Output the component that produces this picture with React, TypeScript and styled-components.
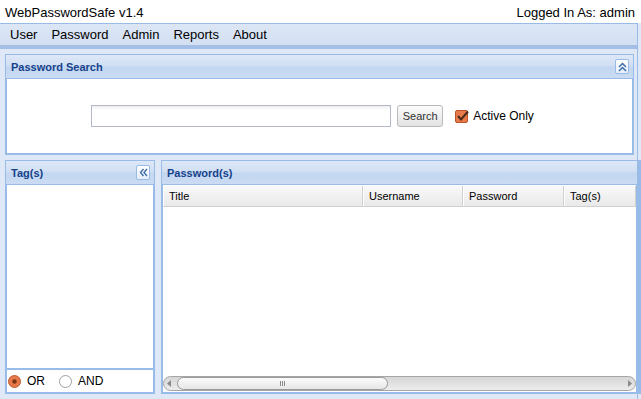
import styled, { createGlobalStyle } from 'styled-components'

const GlobalStyle = createGlobalStyle`
  html, body {
    margin: 0;
    padding: 0;
    background: #dfe8f6;
    font-family: 'Liberation Sans', Arial, sans-serif;
    overflow: hidden;
  }
`

const Page = styled.div`
  width: 641px;
  height: 399px;
  display: flex;
  flex-direction: column;
  background: #dfe8f6;
`

const TopBar = styled.div`
  height: 23px;
  background: #fff;
  display: flex;
  align-items: center;
  justify-content: space-between;
  padding: 1px 6px 0 5px;
  box-sizing: border-box;
  font-size: 13px;
  color: #000;
`

const Shell = styled.div`
  flex: 1;
  width: 638px;
  border-right: 1px solid #99bbe8;
  box-sizing: border-box;
  display: flex;
  flex-direction: column;
`

const MenuBar = styled.div`
  height: 26px;
  box-sizing: border-box;
  border-top: 1px solid #99bbe8;
  border-bottom: 4px solid #a4bfe6;
  background: linear-gradient(#dce6f5, #d3e0f2);
  display: flex;
  align-items: center;
  padding-left: 3px;
`

const MenuItem = styled.span`
  font-size: 13px;
  padding: 0 7px;
  color: #000;
`

const Content = styled.div`
  display: flex;
  flex-direction: column;
  gap: 5px;
  padding: 5px 3px 0 5px;
`

const Panel = styled.div<{ $width?: number; $height: number; $grow?: boolean; $overflow?: boolean }>`
  display: flex;
  flex-direction: column;
  box-sizing: border-box;
  height: ${({ $height }) => $height}px;
  width: ${({ $width }) => ($width ? `${$width}px` : 'auto')};
  flex: ${({ $grow }) => ($grow ? '1' : 'none')};
  border: 1px solid #99bbe8;
  border-right-width: ${({ $overflow }) => ($overflow ? '4px' : '1px')};
  margin-right: ${({ $overflow }) => ($overflow ? '-7px' : '0')};
  background: #fff;
`

const PanelHeader = styled.div`
  height: 24px;
  flex: none;
  box-sizing: border-box;
  border-bottom: 1px solid #99bbe8;
  background: linear-gradient(#dde8f7 0%, #d2e0f4 45%, #c4d7f1 52%, #cadbf3 100%);
  display: flex;
  align-items: center;
  justify-content: space-between;
  padding: 0 4px 0 5px;
`

const PanelTitle = styled.span`
  font-size: 11px;
  font-weight: bold;
  color: #15428b;
`

const ToolButton = styled.div`
  width: 14px;
  height: 15px;
  box-sizing: border-box;
  border: 1px solid #99bbe8;
  border-radius: 2px;
  background: linear-gradient(#ffffff, #e6eefa);
  display: flex;
  align-items: center;
  justify-content: center;
`

const PanelBody = styled.div`
  flex: 1;
  display: flex;
  flex-direction: column;
  border: 1px solid #99bbe8;
  border-top: none;
  background: #fff;
  min-height: 0;
`

const SearchBody = styled(PanelBody)`
  flex-direction: row;
  align-items: center;
  justify-content: center;
  padding-right: 14px;
`

const SearchInput = styled.input`
  width: 300px;
  height: 22px;
  box-sizing: border-box;
  border: 1px solid #b5b8c8;
  background: linear-gradient(#eeeeee 0px, #ffffff 4px);
  outline: none;
  margin: 0;
`

const SearchButton = styled.button`
  margin-left: 6px;
  height: 22px;
  width: 46px;
  box-sizing: border-box;
  border: 1px solid #b9b9b9;
  border-radius: 3px;
  background: linear-gradient(#fbfbfb, #e3e3e3);
  font-family: 'Liberation Sans', Arial, sans-serif;
  font-size: 11px;
  color: #333;
  padding: 0;
`

const CheckLabel = styled.label`
  margin-left: 12px;
  display: flex;
  align-items: center;
  gap: 4px;
  font-size: 12px;
  color: #000;
`

const Row = styled.div`
  display: flex;
  gap: 6px;
`

const TagList = styled.div`
  flex: 1;
  border-bottom: 2px solid #99bbe8;
`

const RadioRow = styled.div`
  height: 22px;
  display: flex;
  align-items: center;
  padding-left: 1px;
  font-size: 12px;
`

const RadioOption = styled.span`
  display: flex;
  align-items: center;
  gap: 6px;
  margin-right: 14px;
`

const GridHeader = styled.div`
  display: flex;
  height: 21px;
  flex: none;
  box-sizing: border-box;
  margin-top: 1px;
  border-bottom: 1px solid #d0d0d0;
  background: linear-gradient(#f9f9f9, #e9e9e9);
`

const HeaderCell = styled.div<{ $width?: number }>`
  width: ${({ $width }) => ($width ? `${$width}px` : 'auto')};
  flex: ${({ $width }) => ($width ? 'none' : '1')};
  box-sizing: border-box;
  border-right: 1px solid #d0d0d0;
  border-left: 1px solid #fff;
  font-size: 11px;
  color: #000;
  display: flex;
  align-items: center;
  padding-left: 5px;
`

const GridBody = styled.div`
  flex: 1;
  background: #fff;
`

const ScrollTrack = styled.div`
  height: 15px;
  margin: 0 0 1px 0;
  box-sizing: border-box;
  border: 1px solid #a5a5a5;
  border-radius: 8px;
  background: linear-gradient(#d6d6d6, #ececec);
  display: flex;
  align-items: center;
  padding: 0 3px 0 3px;
`

const ScrollThumb = styled.div`
  margin-left: 5px;
  width: 211px;
  height: 13px;
  box-sizing: border-box;
  border: 1px solid #9a9a9a;
  border-radius: 7px;
  background: linear-gradient(#fbfbfb, #e6e6e6);
  display: flex;
  align-items: center;
  justify-content: center;
  gap: 1px;
`

const Grip = styled.span`
  width: 1px;
  height: 5px;
  background: #8a8a8a;
`

const Spacer = styled.div`
  flex: 1;
`

const Arrow = ({ dir }: { dir: 'left' | 'right' }) => (
  <svg width="5" height="7" viewBox="0 0 5 7">
    <path d={dir === 'left' ? 'M4 0 L0 3.5 L4 7 Z' : 'M1 0 L5 3.5 L1 7 Z'} fill="#8a8a8a" />
  </svg>
)

const DoubleUp = () => (
  <svg width="9" height="10" viewBox="0 0 9 10">
    <path d="M1 5 L4.5 1.5 L8 5 M1 9 L4.5 5.5 L8 9" fill="none" stroke="#3f6fa8" strokeWidth="1.5" />
  </svg>
)

const DoubleLeft = () => (
  <svg width="9" height="9" viewBox="0 0 9 9">
    <path d="M4.5 1 L1.5 4.5 L4.5 8 M8 1 L5 4.5 L8 8" fill="none" stroke="#3f6fa8" strokeWidth="1.4" />
  </svg>
)

const CheckBox = () => (
  <svg width="14" height="13" viewBox="0 0 14 13">
    <rect x="0.5" y="0.5" width="12" height="12" rx="1.5" fill="#e8794a" stroke="#b9532b" />
    <path d="M3 6 L6 9.5 L13 1.5" fill="none" stroke="#4a2a1c" strokeWidth="2" />
  </svg>
)

const Radio = ({ checked }: { checked?: boolean }) => (
  <svg width="13" height="13" viewBox="0 0 13 13">
    <circle cx="6.5" cy="6.5" r="6" fill={checked ? '#e8794a' : '#fff'} stroke={checked ? '#bf5a31' : '#a0a0a0'} />
    {checked && <circle cx="6.5" cy="6.5" r="2.2" fill="#7a3415" />}
  </svg>
)

const menuItems = ['User', 'Password', 'Admin', 'Reports', 'About']

const columns: { title: string; width?: number }[] = [
  { title: 'Title', width: 200 },
  { title: 'Username', width: 100 },
  { title: 'Password', width: 101 },
  { title: 'Tag(s)' }
]

export default function App() {
  return (
    <Page>
      <GlobalStyle />
      <TopBar>
        <span>WebPasswordSafe v1.4</span>
        <span>Logged In As: admin</span>
      </TopBar>
      <Shell>
        <MenuBar>
          {menuItems.map((item) => (
            <MenuItem key={item}>{item}</MenuItem>
          ))}
        </MenuBar>
        <Content>
          <Panel $height={101}>
            <PanelHeader>
              <PanelTitle>Password Search</PanelTitle>
              <ToolButton>
                <DoubleUp />
              </ToolButton>
            </PanelHeader>
            <SearchBody>
              <SearchInput type="text" />
              <SearchButton>Search</SearchButton>
              <CheckLabel>
                <CheckBox />
                Active Only
              </CheckLabel>
            </SearchBody>
          </Panel>
          <Row>
            <Panel $width={150} $height={234}>
              <PanelHeader>
                <PanelTitle>Tag(s)</PanelTitle>
                <ToolButton>
                  <DoubleLeft />
                </ToolButton>
              </PanelHeader>
              <PanelBody>
                <TagList />
                <RadioRow>
                  <RadioOption>
                    <Radio checked />
                    OR
                  </RadioOption>
                  <RadioOption>
                    <Radio />
                    AND
                  </RadioOption>
                </RadioRow>
              </PanelBody>
            </Panel>
            <Panel $height={234} $grow $overflow>
              <PanelHeader>
                <PanelTitle>Password(s)</PanelTitle>
              </PanelHeader>
              <PanelBody>
                <GridHeader>
                  {columns.map((col) => (
                    <HeaderCell key={col.title} $width={col.width}>
                      {col.title}
                    </HeaderCell>
                  ))}
                </GridHeader>
                <GridBody />
                <ScrollTrack>
                  <Arrow dir="left" />
                  <ScrollThumb>
                    <Grip />
                    <Grip />
                    <Grip />
                  </ScrollThumb>
                  <Spacer />
                  <Arrow dir="right" />
                </ScrollTrack>
              </PanelBody>
            </Panel>
          </Row>
        </Content>
      </Shell>
    </Page>
  )
}
